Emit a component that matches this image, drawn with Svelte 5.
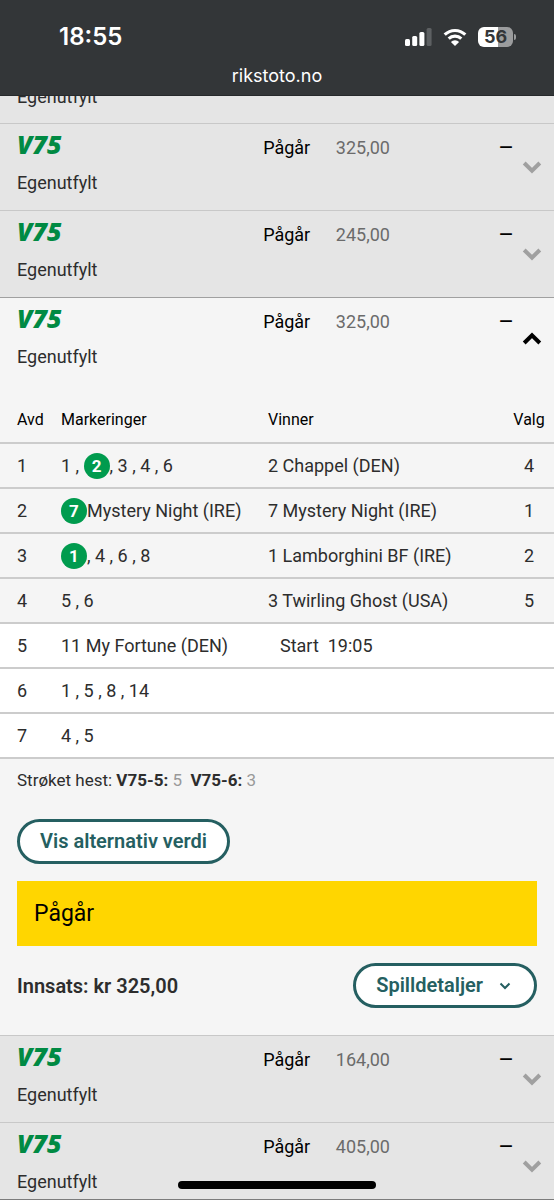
<script>
  const before = [{ amount: '325,00' }, { amount: '245,00' }];
  const after = [{ amount: '164,00' }, { amount: '405,00' }];

  const legs = [
    { no: 1, marks: [{ text: '1 , ' }, { hit: '2' }, { text: ', 3 , 4 , 6' }], winner: '2 Chappel (DEN)', picks: 4 },
    { no: 2, marks: [{ hit: '7' }, { text: 'Mystery Night (IRE)' }], winner: '7 Mystery Night (IRE)', picks: 1 },
    { no: 3, marks: [{ hit: '1' }, { text: ', 4 , 6 , 8' }], winner: '1 Lamborghini BF (IRE)', picks: 2 },
    { no: 4, marks: [{ text: '5 , 6' }], winner: '3 Twirling Ghost (USA)', picks: 5 },
    { no: 5, marks: [{ text: '11 My Fortune (DEN)' }], start: 'Start  19:05', open: true },
    { no: 6, marks: [{ text: '1 , 5 , 8 , 14' }], open: true },
    { no: 7, marks: [{ text: '4 , 5' }], open: true },
  ];
</script>

{#snippet betRow(bet, expanded)}
  <button class="bet" class:expanded aria-expanded={expanded}>
    <span class="game">
      <span class="logo">V75</span>
      <span class="kind">Egenutfylt</span>
    </span>
    <span class="status">Pågår</span>
    <span class="amount">{bet.amount}</span>
    <span class="dash">–</span>
    <svg class="chevron" viewBox="0 0 20 14" aria-hidden="true">
      {#if expanded}
        <path d="M2.2 11 10 3.4 17.8 11" />
      {:else}
        <path d="M2.2 3 10 10.6 17.8 3" />
      {/if}
    </svg>
  </button>
{/snippet}

<div class="screen">
  <header>
    <div class="statusbar">
      <span class="clock">18:55</span>
      <span class="indicators">
        <svg width="28" height="18" viewBox="0 0 28 18" aria-hidden="true">
          <rect x="1" y="11" width="5" height="7" rx="1.5" fill="#fff" />
          <rect x="8.2" y="8" width="5" height="10" rx="1.5" fill="#fff" />
          <rect x="15.4" y="4" width="5" height="14" rx="1.5" fill="#fff" />
          <rect x="22.6" y="0" width="5" height="18" rx="1.5" fill="#5d6062" />
        </svg>
        <svg width="24" height="18" viewBox="0 0 24 18" aria-hidden="true">
          <g fill="none" stroke="#fff" stroke-width="3.1">
            <path d="M1.700 6.700a14.600 14.600 0 0 1 20.600 0" />
            <path d="M5.700 10.700a9 9 0 0 1 12.600 0" />
          </g>
          <path d="M12 18 7.900 13.900a5.800 5.800 0 0 1 8.200 0z" fill="#fff" />
        </svg>
        <span class="battery"><span class="level">56</span></span>
      </span>
    </div>
    <div class="address">rikstoto.no</div>
  </header>

  <main>
    <div class="bet-tail"><span>Egenutfylt</span></div>
    {#each before as bet}
      {@render betRow(bet, false)}
    {/each}

    <section class="open-bet">
      {@render betRow({ amount: '325,00' }, true)}
      <table>
        <thead>
          <tr>
            <th class="leg">Avd</th>
            <th class="marks">Markeringer</th>
            <th>Vinner</th>
            <th class="picks">Valg</th>
          </tr>
        </thead>
        <tbody>
          {#each legs as leg}
            <tr class:pending={leg.open}>
              <td class="leg">{leg.no}</td>
              <td class="marks">{#each leg.marks as m}{#if m.hit}<span class="hit">{m.hit}</span>{:else}{m.text}{/if}{/each}</td>
              <td class:start={leg.start}>{leg.winner ?? leg.start ?? ''}</td>
              <td class="picks">{leg.picks ?? ''}</td>
            </tr>
          {/each}
        </tbody>
      </table>

      <div class="details">
        <p class="scratched">Strøket hest: <b>V75-5:</b> <i>5</i>&nbsp; <b>V75-6:</b> <i>3</i></p>
        <button class="pill">Vis alternativ verdi</button>
        <div class="banner">Pågår</div>
        <div class="footer">
          <strong>Innsats: kr 325,00</strong>
          <button class="pill">
            Spilldetaljer
            <svg width="12" height="8" viewBox="0 0 12 8" aria-hidden="true"><path d="M1.500 1.500 6 6l4.500-4.500" /></svg>
          </button>
        </div>
      </div>
    </section>

    {#each after as bet}
      {@render betRow(bet, false)}
    {/each}
  </main>
  <div class="home"></div>
</div>

<style>
  :global(body) {
    margin: 0;
  }
  .screen {
    display: flex;
    flex-direction: column;
    height: 100vh;
    box-sizing: border-box;
    border-bottom: 1px solid #7c7c7c;
    background: #e5e5e5;
    color: #2d2d2d;
    font: 18px/24px Roboto, sans-serif;
  }
  header {
    flex: none;
    height: 96px;
    box-sizing: border-box;
    border-bottom: 1px solid #26292b;
    background: #333638;
    color: #fff;
    font-family: Inter, sans-serif;
  }
  .statusbar {
    display: flex;
    justify-content: space-between;
    align-items: center;
    padding: 24px 38px 0 59px;
    height: 26px;
  }
  .clock {
    font-size: 24px;
    font-weight: 600;
  }
  .indicators {
    display: flex;
    align-items: center;
    gap: 11px;
  }
  .battery {
    display: flex;
  }
  .battery::after {
    content: '';
    align-self: center;
    width: 2px;
    height: 6px;
    margin-left: 1px;
    border-radius: 0 2px 2px 0;
    background: #9b9c9d;
  }
  .level {
    width: 35px;
    border-radius: 6px;
    background: linear-gradient(90deg, #fff 56%, #9b9c9d 56%);
    color: #333638;
    font-size: 18px;
    font-weight: 700;
    line-height: 20px;
    text-align: center;
  }
  .address {
    padding-top: 14px;
    text-align: center;
  }
  main {
    flex: 1;
    min-height: 0;
    overflow: hidden;
  }
  .bet-tail {
    display: flex;
    align-items: flex-end;
    height: 27px;
    box-sizing: border-box;
    padding: 0 17px 14px;
    overflow: hidden;
  }
  button {
    margin: 0;
    font: inherit;
    text-align: left;
    cursor: pointer;
  }
  .bet {
    display: grid;
    grid-template-columns: 244fr 72fr 161fr auto 20px;
    width: 100%;
    height: 87px;
    padding: 0 12px 0 17px;
    border: 0;
    border-top: 1px solid #c8c8c8;
    background: #e5e5e5;
    color: #2d2d2d;
    align-items: start;
  }
  .expanded {
    border-top-color: #a0a0a0;
    background: #f5f5f5;
  }
  .game {
    display: flex;
    flex-direction: column;
    gap: 13px;
    padding-top: 6px;
  }
  .logo {
    color: #008a43;
    font: italic 800 25px/28px "Open Sans", sans-serif;
  }
  .status,
  .amount,
  .dash {
    padding-top: 12px;
  }
  .status,
  .dash {
    color: #000;
  }
  .amount {
    color: #6b6b6b;
  }
  .dash {
    padding-right: 8px;
    font-size: 24px;
  }
  .chevron {
    width: 20px;
    height: 14px;
    margin-top: 36px;
    fill: none;
    stroke: #a0a0a0;
    stroke-width: 4;
  }
  .expanded .chevron {
    stroke: #000;
    margin-top: 34px;
  }
  .open-bet {
    background: #f5f5f5;
  }
  table {
    width: 100%;
    border-collapse: collapse;
    table-layout: fixed;
  }
  th,
  td {
    box-sizing: border-box;
    height: 45px;
    padding: 0;
    border-bottom: 2px solid #cccccc;
    text-align: left;
    white-space: pre-wrap;
  }
  th {
    height: 59px;
    padding-top: 14px;
    color: #000;
    font-size: 16px;
    font-weight: 400;
  }
  .leg {
    width: 61px;
    padding-left: 17px;
  }
  .marks {
    width: 207px;
    white-space: pre;
  }
  .picks {
    width: 50px;
    text-align: center;
  }
  .start {
    padding-left: 12px;
  }
  .pending {
    background: #fff;
  }
  .hit {
    display: inline-block;
    width: 26px;
    margin: -2px 0;
    border-radius: 50%;
    background: #009b4e;
    color: #fff;
    font-size: 17px;
    font-weight: 700;
    line-height: 26px;
    text-align: center;
  }
  .details {
    padding: 9px 17px 27px;
  }
  p {
    margin: 0 0 27px;
    font-size: 17px;
  }
  i {
    color: #999;
    font-style: normal;
  }
  .pill {
    display: inline-flex;
    align-items: center;
    gap: 16px;
    height: 45px;
    padding: 0 20px 2px;
    border: 3px solid #255f61;
    border-radius: 23px;
    background: #fff;
    color: #255f61;
    font-size: 20px;
    font-weight: 600;
  }
  .pill svg {
    margin: 2px 3px 0 0;
    fill: none;
    stroke: #255f61;
    stroke-width: 2;
  }
  .banner {
    margin: 17px 0;
    padding: 0 17px;
    background: #ffd600;
    color: #000;
    font-size: 23px;
    line-height: 65px;
  }
  .footer {
    display: flex;
    justify-content: space-between;
    align-items: center;
  }
  strong {
    font-size: 20px;
    font-weight: 600;
  }
  .home {
    position: fixed;
    bottom: 11px;
    left: 50%;
    width: 198px;
    height: 8px;
    margin-left: -99px;
    border-radius: 4px;
    background: #000;
  }
</style>
